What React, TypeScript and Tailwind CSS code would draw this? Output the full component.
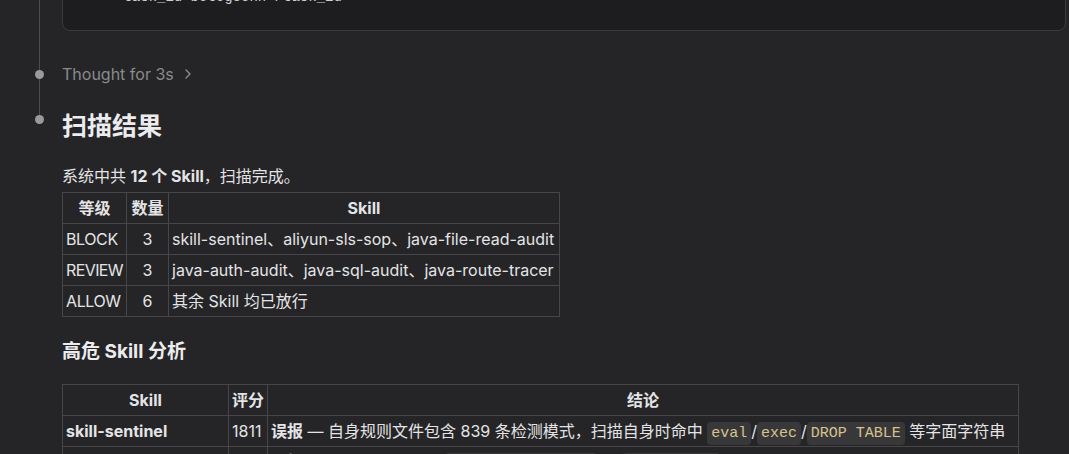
import React from "react";

const font = { fontFamily: '"Inter", "Noto Sans CJK SC", sans-serif' };

function Code({ children }: { children: React.ReactNode }) {
  return (
    <code className="rounded-[4px] bg-[#38383a] px-[4px] py-[3px] font-['Liberation_Mono',monospace] text-[15px] leading-[18px] text-[#d6c38c]">
      {children}
    </code>
  );
}

export default function App() {
  const th = "border border-[#47474a] px-[3px] font-bold text-center";
  const td = "border border-[#47474a] px-[3px] whitespace-nowrap";
  return (
    <div
      className="relative h-[454px] w-[1069px] overflow-hidden bg-[#252527] text-[#e4e4e6]"
      style={font}
    >
      {/* timeline connector */}
      <div className="absolute left-[39px] top-0 h-[120px] w-px bg-[#4c4c4f]" />

      <div className="flex flex-col pl-[62px]">
        {/* code block (scrolled, mostly above viewport) */}
        <div className="-mt-[30px] mr-[3px] h-[61px] rounded-b-[8px] border border-[#3a3a3d] bg-[#1d1d1f] pl-[52px] pt-[18px] font-['Liberation_Mono',monospace] text-[14px] leading-[16px] text-[#cfcfd1]">
          &lt;task_id&gt;b5t6g3ohh&lt;/task_id&gt;
        </div>

        {/* Thought row */}
        <div className="relative mt-[33px] flex h-[20px] items-center gap-[10px] text-[16px] text-[#8a8a8d]">
          <span className="absolute left-[-27px] top-[6px] h-[9px] w-[9px] rounded-full bg-[#9a9a9d]" />
          <span>Thought for 3s</span>
          <svg width="8" height="12" viewBox="0 0 8 12" fill="none">
            <path d="M2 2l4 4-4 4" stroke="#8a8a8d" strokeWidth="1.4" strokeLinecap="round" strokeLinejoin="round" />
          </svg>
        </div>

        {/* Heading */}
        <div className="relative mt-[26px] h-[32px] text-[25px] font-bold leading-[32px] text-[#ececee]">
          <span className="absolute left-[-27px] top-[5px] h-[9px] w-[9px] rounded-full bg-[#9a9a9d]" />
          扫描结果
        </div>

        <p className="mt-[23px] text-[16px] leading-[22px]">
          系统中共 <b>12 个 Skill</b>，扫描完成。
        </p>

        <table className="mt-[5px] w-[497px] table-fixed border-collapse text-[16px] leading-[30px]">
          <colgroup>
            <col className="w-[64px]" />
            <col className="w-[42px]" />
            <col className="w-[391px]" />
          </colgroup>
          <thead>
            <tr>
              <th className={th}>等级</th>
              <th className={th}>数量</th>
              <th className={th}>Skill</th>
            </tr>
          </thead>
          <tbody>
            <tr>
              <td className={td + " tracking-[-0.4px]"}>BLOCK</td>
              <td className={td + " text-center"}>3</td>
              <td className={td}>skill-sentinel、aliyun-sls-sop、java-file-read-audit</td>
            </tr>
            <tr>
              <td className={td + " tracking-[-0.6px]"}>REVIEW</td>
              <td className={td + " text-center"}>3</td>
              <td className={td}>java-auth-audit、java-sql-audit、java-route-tracer</td>
            </tr>
            <tr>
              <td className={td + " tracking-[-0.4px]"}>ALLOW</td>
              <td className={td + " text-center"}>6</td>
              <td className={td}>其余 Skill 均已放行</td>
            </tr>
          </tbody>
        </table>

        <h3 className="mt-[23px] text-[19px] font-bold leading-[24px] text-[#ececee]">高危 Skill 分析</h3>

        <table className="mt-[20px] w-[956px] table-fixed border-collapse text-[16px] leading-[30px]">
          <colgroup>
            <col className="w-[166px]" />
            <col className="w-[39px]" />
            <col className="w-[751px]" />
          </colgroup>
          <thead>
            <tr>
              <th className={th}>Skill</th>
              <th className={th}>评分</th>
              <th className={th}>结论</th>
            </tr>
          </thead>
          <tbody>
            <tr>
              <td className={td + " font-bold"}>skill-sentinel</td>
              <td className={td}>1811</td>
              <td className={td}>
                <b>误报</b> — 自身规则文件包含 839 条检测模式，扫描自身时命中 <Code>eval</Code>/<Code>exec</Code>/<Code>DROP TABLE</Code> 等字面字符串
              </td>
            </tr>
            <tr>
              <td className={td + " font-bold"}>aliyun-sls-sop</td>
              <td className={td}>1203</td>
              <td className={td}>
                <b>误报</b> — 规则文档示例中 <Code>DELETE FROM logs</Code> 和 <Code>rm -rf tmp</Code> 属于正常运维操作说明
              </td>
            </tr>
          </tbody>
        </table>
      </div>
    </div>
  );
}
